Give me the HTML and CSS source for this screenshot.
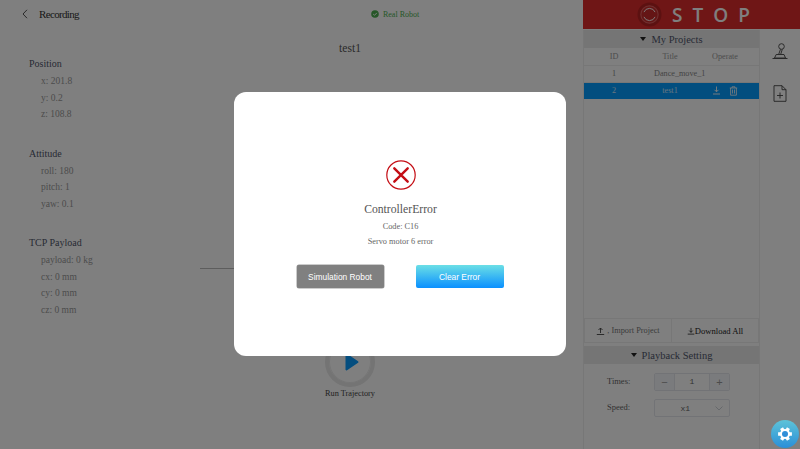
FILE: index.html
```html
<!DOCTYPE html>
<html lang="en">
<head>
<meta charset="utf-8">
<title>Recording</title>
<link rel="stylesheet" href="styles.css">
</head>
<body>
<div class="app">
  <main class="main">
    <header class="topbar">
      <div class="back">
        <svg class="back-icon" width="6" height="10" viewBox="0 0 6 10"><path d="M5 .8 1 5l4 4.2" fill="none" stroke="#555" stroke-width="1"/></svg>
        <span class="back-label">Recording</span>
      </div>
      <div class="status">
        <svg width="8" height="8" viewBox="0 0 8 8"><circle cx="4" cy="4" r="3.800" fill="#4caf50"/><path d="M2.200 4.100 3.500 5.300 5.800 2.900" fill="none" stroke="#fff" stroke-width="1"/></svg>
        <span>Real Robot</span>
      </div>
    </header>
    <div class="body">
      <section class="params">
        <div class="group">
          <h3 class="group-title">Position</h3>
          <p class="val">x: 201.8</p>
          <p class="val">y: 0.2</p>
          <p class="val">z: 108.8</p>
        </div>
        <div class="group">
          <h3 class="group-title">Attitude</h3>
          <p class="val">roll: 180</p>
          <p class="val">pitch: 1</p>
          <p class="val">yaw: 0.1</p>
        </div>
        <div class="group">
          <h3 class="group-title">TCP Payload</h3>
          <p class="val">payload: 0 kg</p>
          <p class="val">cx: 0 mm</p>
          <p class="val">cy: 0 mm</p>
          <p class="val">cz: 0 mm</p>
        </div>
      </section>
      <section class="stage">
        <h2 class="stage-title">test1</h2>
        <div class="track"></div>
        <div class="run-btn">
          <svg class="play" width="14" height="18" viewBox="0 0 14 18"><path d="M1.500 1.500 12.500 9 1.500 16.500Z" fill="#0a9cff" stroke="#0a9cff" stroke-width="2" stroke-linejoin="round"/></svg>
        </div>
        <div class="run-label">Run Trajectory</div>
      </section>
    </div>
  </main>
  <aside class="right">
    <div class="stop">
      <span class="stop-dot">
        <svg width="25" height="25" viewBox="0 0 26 26">
          <circle cx="13" cy="13" r="12.500" fill="#b92222"/>
          <circle cx="13" cy="13" r="9" fill="#c92a2a" stroke="#e26060" stroke-width="1.200"/>
          <path d="M7.200 10.500a6.300 6.300 0 0 1 11.600 0M18.800 15.500a6.300 6.300 0 0 1-11.600 0" fill="none" stroke="#fff" stroke-width="1"/>
        </svg>
      </span>
      <span class="stop-text">STOP</span>
    </div>
    <div class="panels">
      <div class="side">
        <div class="side-head"><span class="caret"></span>My Projects</div>
        <table class="table">
          <thead><tr><th class="c-id">ID</th><th class="c-title">Title</th><th class="c-op">Operate</th></tr></thead>
          <tbody>
            <tr><td>1</td><td class="title-long">Dance_move_1</td><td class="c-op"></td></tr>
            <tr class="sel">
              <td>2</td><td>test1</td>
              <td class="c-op ops">
                <svg width="9" height="9" viewBox="0 0 9 9"><path d="M4.500 .5v5M2.500 3.800 4.500 5.800 6.500 3.800M1 8h7" fill="none" stroke="#fff" stroke-width=".9"/></svg>
                <svg width="9" height="10" viewBox="0 0 9 10"><path d="M.8 2h7.400M3 2V.8h3V2M1.600 2v7.200h5.800V2M3.500 3.500v4M5.500 3.500v4" fill="none" stroke="#fff" stroke-width=".8"/></svg>
              </td>
            </tr>
          </tbody>
        </table>
        <div class="grow"></div>
        <div class="actions">
          <div class="action light">
            <svg width="9" height="8" viewBox="0 0 9 8"><path d="M4.500 6V1M2.500 3 4.500 1 6.500 3M.8 7.500h7.400" fill="none" stroke="#444" stroke-width=".9"/></svg>
            <span>, Import Project</span>
          </div>
          <div class="action dark">
            <svg width="8" height="8" viewBox="0 0 9 8"><path d="M4.500 .5v5M2.500 3.500 4.500 5.500 6.500 3.500M.8 7.500h7.400" fill="none" stroke="#222" stroke-width=".9"/></svg>
            <span>Download All</span>
          </div>
        </div>
        <div class="side-head"><span class="caret"></span>Playback Setting</div>
        <div class="form">
          <div class="form-row">
            <label class="form-label">Times:</label>
            <div class="stepper"><span class="step">−</span><span class="step-val">1</span><span class="step">+</span></div>
          </div>
          <div class="form-row">
            <label class="form-label">Speed:</label>
            <div class="select">
              <span class="select-val">x1</span>
              <svg width="8" height="5" viewBox="0 0 8 5"><path d="M.5.500 4 4 7.500.5" fill="none" stroke="#c0c4cc" stroke-width=".8"/></svg>
            </div>
          </div>
        </div>
      </div>
      <nav class="rail">
        <svg width="16" height="17" viewBox="0 0 16 17"><circle cx="9.500" cy="3.500" r="2.800" fill="none" stroke="#444" stroke-width=".9"/><path d="M8.500 6.300 6.800 11M10.300 6.300 8.800 11M4.200 11.500h7.800l1.500 3.500H2.500Z" fill="none" stroke="#444" stroke-width=".9"/><path d="M.5 15.500h15" stroke="#444" stroke-width=".9"/></svg>
        <svg width="14" height="17" viewBox="0 0 14 17"><path d="M1 .7h8l4 4v11.600H1ZM9 .7v4h4M7 7.500v6M4 10.500h6" fill="none" stroke="#444" stroke-width=".9"/></svg>
      </nav>
    </div>
  </aside>
</div>

<div class="overlay">
  <div class="modal">
    <svg class="err" width="30" height="30" viewBox="0 0 30 30"><circle cx="15" cy="15" r="14.200" fill="none" stroke="#c40d14" stroke-width="1.200"/><path d="M8.300 8.300 21.700 21.700M21.700 8.300 8.300 21.700" stroke="#c40d14" stroke-width="2.400" stroke-linecap="round"/></svg>
    <div class="err-title">ControllerError</div>
    <div class="err-line">Code: C16</div>
    <div class="err-line">Servo motor 6 error</div>
    <div class="btns">
      <button class="btn btn-gray">Simulation Robot</button>
      <button class="btn btn-blue">Clear Error</button>
    </div>
  </div>
</div>

<div class="gear">
  <svg width="16" height="14" viewBox="-8 -7 16 14">
    <circle r="5" fill="#fff"/>
    <path d="M-6.900 0H6.900M-3.450-5.970 3.450 5.970M3.450-5.970-3.450 5.970" stroke="#fff" stroke-width="3.400"/>
    <circle r="3" fill="#2f8fd8"/>
  </svg>
</div>
</body>
</html>
```

FILE: styles.css
```css
* { box-sizing: border-box; }
html, body { margin: 0; height: 100%; overflow: hidden; background: #fff; }
body { font-family: "Liberation Serif", serif; color: #666; }
h2, h3, p { margin: 0; font-weight: normal; }

.app { display: flex; width: 800px; height: 449px; }

/* main */
.main { width: 583px; display: flex; flex-direction: column; }
.topbar { height: 28px; display: flex; align-items: center; padding-left: 22px; }
.back { display: flex; align-items: center; gap: 11px; }
.back-label { font-size: 11px; letter-spacing: -.65px; color: #333; }
.status { margin-left: 292px; display: flex; align-items: center; gap: 4px; font-size: 8px; color: #4caf50; }

.body { flex: 1; display: flex; }
.params { width: 200px; padding: 29px 0 0 29px; }
.group { margin-bottom: 24px; }
.group-title { font-size: 10px; line-height: 13px; color: #50566a; margin-bottom: 3px; }
.val { font-size: 9.500px; line-height: 16.500px; padding-left: 12px; color: #999; }

.stage { width: 300px; display: flex; flex-direction: column; align-items: center; }
.stage-title { font-size: 11.600px; line-height: 14px; margin-top: 14px; color: #555; }
.track { width: 100%; height: 1px; background: #bbb; margin-top: 212px; }
.run-btn { width: 50px; height: 50px; margin-top: 68px; border-radius: 50%; background: #fff; border: 4px solid #e8e8e8; box-shadow: inset 0 0 0 1px #ececec; display: flex; align-items: center; justify-content: center; }
.play { margin-left: 4px; }
.run-label { font-size: 8.300px; line-height: 12px; margin-top: 1px; color: #444; }

/* right */
.right { width: 217px; display: flex; flex-direction: column; }
.stop { height: 30px; background: #df2c2c; display: flex; align-items: center; justify-content: center; gap: 10px; padding-left: 14px; border-bottom: 1px solid #fff; }
.stop-dot { display: flex; }
.stop-text { font-family: "Open Sans", "Liberation Sans", sans-serif; font-size: 19px; letter-spacing: 10px; color: #fff; font-weight: 600; }

.panels { flex: 1; display: flex; }
.side { width: 177px; border-left: 1px solid #eee; border-right: 1px solid #eee; display: flex; flex-direction: column; }
.side-head { height: 18px; background: #eaeaea; display: flex; align-items: center; justify-content: center; gap: 5px; font-size: 10.500px; color: #50566a; flex: none; }
.caret { width: 0; height: 0; border-left: 3.500px solid transparent; border-right: 3.500px solid transparent; border-top: 4px solid #222; }

.table { width: 100%; border-collapse: collapse; table-layout: fixed; font-size: 8.200px; text-align: center; color: #888; }
.table th { font-weight: normal; height: 17px; padding: 0; border-bottom: 1px solid #eee; color: #999; }
.table td { height: 17px; padding: 0; border-bottom: 1px solid #eee; }
.c-id { width: 60px; }
.c-title { width: 52px; }
.table .c-op { padding-right: 5px; }
.table .title-long { text-align: left; padding-left: 10px; white-space: nowrap; }
.sel td { background: #059dff; color: #cfe9ff; border-bottom: 0; }
.ops svg { vertical-align: middle; margin: 0 2.500px; }

.grow { flex: 1; }
.actions { display: flex; height: 25px; margin-bottom: 3px; border: 1px solid #eee; flex: none; }
.action { flex: 1; display: flex; align-items: center; justify-content: center; font-size: 8.300px; color: #333; }
.action.light { color: #777; gap: 2px; border-right: 1px solid #eee; width: 87px; flex: none; }
.action.dark { font-size: 8.600px; color: #222; }

.form { height: 85px; padding: 9px 0 0 23px; flex: none; }
.form-row { display: flex; align-items: center; height: 18px; margin-bottom: 8px; }
.form-label { width: 47px; font-size: 8.500px; color: #666; padding-bottom: 2px; }
.stepper { width: 76px; height: 18px; border: 1px solid #e4e7ed; border-radius: 2px; display: flex; align-items: center; font-family: "Liberation Mono", monospace; font-size: 8px; color: #666; }
.step { width: 19px; height: 100%; background: #f5f7fa; display: flex; align-items: center; justify-content: center; font-family: "Liberation Sans", sans-serif; font-size: 11px; color: #999; }
.step-val { flex: 1; text-align: center; border-left: 1px solid #e4e7ed; border-right: 1px solid #e4e7ed; line-height: 16px; }
.select { width: 76px; height: 18px; border: 1px solid #e4e7ed; border-radius: 2px; display: flex; align-items: center; justify-content: flex-end; gap: 25px; padding-right: 6px; font-family: "Liberation Mono", monospace; font-size: 8px; color: #666; }

.rail { flex: 1; display: flex; flex-direction: column; align-items: center; padding-top: 13px; gap: 25px; }

/* overlay */
.overlay { position: fixed; inset: 0; background: rgba(0,0,0,.5); display: flex; align-items: flex-start; justify-content: center; }
.modal { width: 332px; height: 264px; margin-top: 92px; background: #fff; border-radius: 12px; display: flex; flex-direction: column; align-items: center; padding-top: 68px; }
.err { margin-left: 2px; display: block; }
.err-title { font-size: 11.700px; line-height: 14px; margin-top: 13px; margin-left: 1px; color: #555; }
.err-line { font-size: 8.300px; line-height: 12px; margin-top: 3px; margin-left: 1px; color: #666; }
.err-title + .err-line { margin-top: 4px; }
.btns { display: flex; gap: 32px; margin-top: 17px; }
.btn { height: 23px; border: 0; border-radius: 2px; font-family: "Liberation Sans", sans-serif; font-size: 8.400px; color: #fff; padding: 0; }
.btn-gray { width: 87px; background: #808080; box-shadow: 0 0 0 .5px #999; }
.btn-blue { width: 88px; background: linear-gradient(#6bdfe6, #0a90ff); }

.gear { position: fixed; left: 771px; top: 420px; width: 28px; height: 28px; border-radius: 50%; background: linear-gradient(#5ec3d8, #2a8fd8); display: flex; align-items: center; justify-content: center; }
```
